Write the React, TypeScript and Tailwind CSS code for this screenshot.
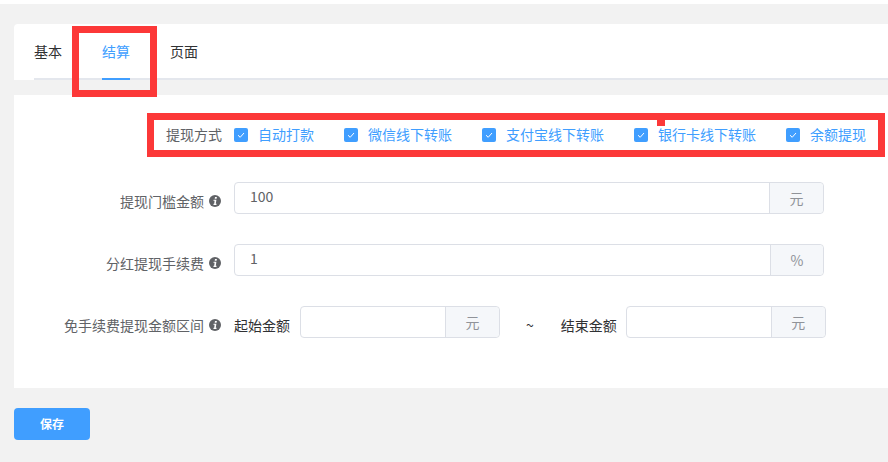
const font = 'font-["Microsoft_YaHei","Noto_Sans_CJK_SC","Liberation_Sans",sans-serif]'

function InfoIcon() {
  return (
    <svg width="12" height="12" viewBox="0 0 12 12" className="ml-[5px] shrink-0">
      <circle cx="6" cy="6" r="6" fill="#606266" />
      <path d="M6 2.1h1.9l-.3 1.7H5.7z" fill="#fff" />
      <path d="M4.6 4.7h2.8L6.8 8.8h.8l-.2 1.1H4.4l.2-1.1h.6L5.6 5.8h-1.2z" fill="#fff" />
    </svg>
  )
}

function Check({ label, className }: { label: string; className: string }) {
  return (
    <label className={`flex items-center ${className}`}>
      <span className="flex h-[14px] w-[14px] items-center justify-center rounded-[2px] bg-[#409eff]">
        <svg width="12" height="12" viewBox="0 0 12 12" fill="none" stroke="#fff" strokeWidth="1">
          <path d="M3 6.2l2.2 2.1L9 4" />
        </svg>
      </span>
      <span className="mb-[2px] ml-[10px] whitespace-nowrap text-sm leading-none text-[#409eff]">{label}</span>
    </label>
  )
}

function Addon({ children, className }: { children: React.ReactNode; className: string }) {
  return (
    <div className={`flex h-full items-center justify-center rounded-r-[4px] border-l border-[#dcdfe6] bg-[#f5f7fa] text-sm text-[#909399] ${className}`}>
      {children}
    </div>
  )
}

function FieldLabel({ text }: { text: string }) {
  return (
    <div className="mr-px flex w-[207px] shrink-0 items-center justify-end whitespace-nowrap pt-[6px] text-sm leading-none text-[#606266]">
      {text}
      <InfoIcon />
    </div>
  )
}

function InputRow({ label, value, unit, unitWidth }: { label: string; value: string; unit: string; unitWidth: string }) {
  return (
    <div className="flex h-8 items-center">
      <FieldLabel text={label} />
      <div className="ml-3 flex h-8 w-[590px] overflow-hidden rounded-[4px] border border-[#dcdfe6] bg-white">
        <div className="flex flex-1 items-center pb-[5px] pl-[15px] text-sm text-[#606266]">{value}</div>
        <Addon className={unitWidth}>{unit}</Addon>
      </div>
    </div>
  )
}

export default function App() {
  return (
    <div className={`${font} relative h-[462px] w-[888px] overflow-hidden bg-white`}>
      <div className="mt-1 h-[458px] bg-[#f2f2f2] pl-[14px] pt-5">
        {/* tabs */}
        <div className="h-[56px] rounded-tl-[4px] bg-white pl-5 pt-[2px]">
          <div className="flex h-[54px] border-b-2 border-[#e4e7ed] text-sm">
            <div className="mb-[-2px] flex w-7 items-center justify-center whitespace-nowrap pb-1 text-[#303133]">基本</div>
            <div className="mb-[-2px] ml-10 flex w-7 items-center justify-center whitespace-nowrap border-b-2 border-[#409eff] pb-[2px] text-[#409eff]">结算</div>
            <div className="mb-[-2px] ml-10 flex w-7 items-center justify-center whitespace-nowrap pb-1 text-[#303133]">页面</div>
          </div>
        </div>

        {/* form */}
        <div className="mt-[15px] h-[293px] bg-white pt-[33px]">
          <div className="flex h-[14px] items-center">
            <div className="mb-[2px] w-[208px] shrink-0 text-right text-sm leading-none text-[#606266]">提现方式</div>
            <Check label="自动打款" className="ml-3" />
            <Check label="微信线下转账" className="ml-[30px]" />
            <Check label="支付宝线下转账" className="ml-[30px]" />
            <Check label="银行卡线下转账" className="ml-[30px]" />
            <Check label="余额提现" className="ml-[30px]" />
          </div>

          <div className="mt-[40px]">
            <InputRow label="提现门槛金额" value="100" unit="元" unitWidth="w-[54px]" />
          </div>
          <div className="mt-[30px]">
            <InputRow label="分红提现手续费" value="1" unit="%" unitWidth="w-[53px]" />
          </div>

          <div className="mt-[30px] flex h-8 items-center">
            <FieldLabel text="免手续费提现金额区间" />
            <span className="ml-3 whitespace-nowrap pt-[6px] text-sm font-normal leading-none text-[#303133]">起始金额</span>
            <div className="ml-[10px] flex h-8 w-[200px] overflow-hidden rounded-[4px] border border-[#dcdfe6] bg-white">
              <div className="flex-1" />
              <Addon className="w-[54px]">元</Addon>
            </div>
            <span className="ml-[26px] pt-[6px] text-sm leading-none text-[#303133]">~</span>
            <span className="ml-[27px] whitespace-nowrap pt-[6px] text-sm leading-none text-[#303133]">结束金额</span>
            <div className="ml-[9px] flex h-8 w-[200px] overflow-hidden rounded-[4px] border border-[#dcdfe6] bg-white">
              <div className="flex-1" />
              <Addon className="w-[54px]">元</Addon>
            </div>
          </div>
        </div>

        <button className="mt-5 flex h-8 w-[76px] items-center justify-center rounded-[4px] bg-[#409eff] text-xs font-bold text-white">
          保存
        </button>
      </div>

      {/* annotation boxes drawn over the shot */}
      <div className="absolute left-[72px] top-[26px] h-[71px] w-[85px] border-[7px] border-[#fc3838]" />
      <div className="absolute left-[147px] top-[113px] h-[44px] w-[738px] border-[7px] border-[#fc3838]" />
      <div className="absolute left-[657px] top-[119px] h-[7px] w-2 bg-[#fc3838]" />
    </div>
  )
}
